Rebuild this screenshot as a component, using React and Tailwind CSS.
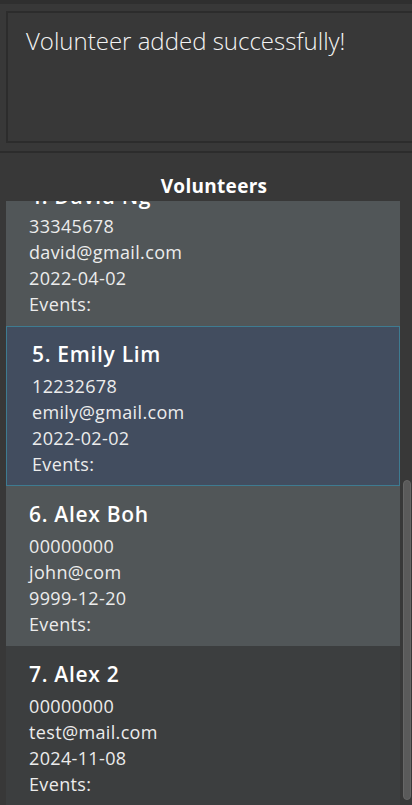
import React from "react";

const volunteers = [
  { id: 4, name: "David Ng", phone: "33345678", email: "david@gmail.com", date: "2022-04-02", bg: "bg-[#515658]", first: true },
  { id: 5, name: "Emily Lim", phone: "12232678", email: "emily@gmail.com", date: "2022-02-02", selected: true },
  { id: 6, name: "Alex Boh", phone: "00000000", email: "john@com", date: "9999-12-20", bg: "bg-[#515658]" },
  { id: 7, name: "Alex 2", phone: "00000000", email: "test@mail.com", date: "2024-11-08", bg: "bg-[#3c3e3f]" },
];

function VolunteerCard({ v }) {
  const box = v.selected
    ? "bg-[#424d5f] border border-[#3e7b91] pl-[25px] pt-[14px]"
    : `${v.bg} pl-[23px] ${v.first ? "pt-[17px]" : "pt-[15px]"}`;
  return (
    <div className={`h-[160px] box-border ${box}`}>
      <div className="text-[21px] leading-[26px] font-semibold tracking-[0.7px] text-white">
        {v.id}. {v.name}
      </div>
      <div className={`${v.first ? "mt-[4px]" : "mt-[6px]"} text-[18px] leading-[26px] tracking-[0.35px] text-[#ececec]`}>
        <div>{v.phone}</div>
        <div>{v.email}</div>
        <div>{v.date}</div>
        <div>Events:</div>
      </div>
    </div>
  );
}

export default function App() {
  return (
    <div
      className="w-[412px] h-[805px] bg-[#383838] overflow-hidden flex flex-col"
      style={{ fontFamily: '"Open Sans", "Noto Sans", sans-serif' }}
    >
      {/* top edge */}
      <div className="h-[4px] bg-[#2f2f2f]" />

      {/* result display */}
      <div className="pt-[7px] pl-[6px]">
        <div className="h-[132px] border-2 border-r-0 border-[#2c2c2c] pl-[18px] pt-[12px]">
          <p className="text-[24px] leading-[32px] font-light text-[#f4f4f4]">
            Volunteer added successfully!
          </p>
        </div>
      </div>

      <div className="h-[8px]" />
      <div className="h-[2px] bg-[#2c2c2c]" />

      {/* list panel */}
      <div className="pt-[21px] pb-[3px] pl-[16px] text-center">
        <h2 className="text-[19px] leading-[24px] font-bold tracking-[0.3px] text-white">Volunteers</h2>
      </div>

      <div className="flex flex-1 min-h-0 pl-[6px]">
        <div className="w-[394px] overflow-hidden">
          <div className="-mt-[35px]">
            {volunteers.map((v) => (
              <VolunteerCard key={v.id} v={v} />
            ))}
          </div>
        </div>
        <div className="flex-1 flex justify-end pr-[1px]">
          <div className="w-[8px] mt-[279px] h-[320px] rounded-[4px] bg-[#5a5a5a] border border-[#666666]" />
        </div>
      </div>
    </div>
  );
}
